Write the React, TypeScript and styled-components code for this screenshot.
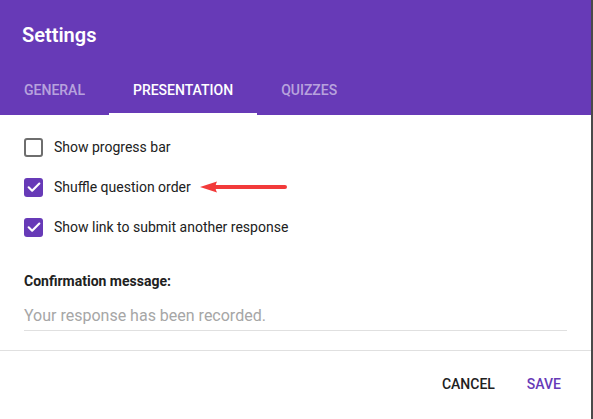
import * as React from 'react';
import styled, { createGlobalStyle } from 'styled-components';

const PURPLE = '#673ab7';

interface TabProps {
  active?: boolean;
}

interface CheckProps {
  checked?: boolean;
}

interface ButtonProps {
  primary?: boolean;
}

const tabs = ['General', 'Presentation', 'Quizzes'];

const options = [
  { label: 'Show progress bar', checked: false, marked: false },
  { label: 'Shuffle question order', checked: true, marked: true },
  { label: 'Show link to submit another response', checked: true, marked: false },
];

const CheckMark = () => (
  <svg width="16" height="16" viewBox="0 0 24 24">
    <path d="M4 12.5l5.2 5L20 6.8" fill="none" stroke="#fff" strokeWidth="3.2" strokeLinecap="round" strokeLinejoin="round" />
  </svg>
);

const RedArrow = () => (
  <svg width="88" height="12" viewBox="0 0 88 12">
    <path d="M0 6 L17 0.5 Q14 6 17 11.5 Z" fill="#f23a3a" />
    <line x1="15" y1="6" x2="85" y2="6" stroke="#f23a3a" strokeWidth="4" strokeLinecap="round" />
  </svg>
);

const App: React.FC = () => {
  return (
    <>
      <GlobalStyle />
      <Dialog>
        <Header>
          <Title>Settings</Title>
          <TabBar>
            {tabs.map(tab => (
              <Tab key={tab} active={tab === 'Presentation'}>{tab}</Tab>
            ))}
          </TabBar>
        </Header>

        <Body>
          {options.map(option => (
            <Row key={option.label}>
              <Box checked={option.checked}>{option.checked ? <CheckMark /> : null}</Box>
              <Label>{option.label}</Label>
              {option.marked ? <Pointer><RedArrow /></Pointer> : null}
            </Row>
          ))}

          <FieldLabel>Confirmation message:</FieldLabel>
          <Field>Your response has been recorded.</Field>
        </Body>

        <Footer>
          <Button>Cancel</Button>
          <Button primary>Save</Button>
        </Footer>
      </Dialog>
    </>
  );
};

export default App;

const GlobalStyle = createGlobalStyle`
  html, body {
    margin: 0;
    padding: 0;
    background: #ffffff;
  }

  body {
    font-family: Roboto, "Liberation Sans", Arial, sans-serif;
    -webkit-font-smoothing: antialiased;
  }
`;

const Dialog = styled.div`
  width: 593px;
  height: 419px;
  box-sizing: border-box;
  border-right: 2px solid #4a4a4a;
  background: #ffffff;
  display: flex;
  flex-direction: column;
  overflow: hidden;
`;

const Header = styled.header`
  background: ${PURPLE};
  height: 115px;
  padding-top: 23px;
  box-sizing: border-box;
`;

const Title = styled.h1`
  margin: 0 0 20px;
  padding-left: 22px;
  font-size: 20px;
  line-height: 24px;
  font-weight: 600;
  color: #ffffff;
`;

const TabBar = styled.nav`
  display: flex;
`;

const Tab = styled.div<TabProps>`
  height: 48px;
  box-sizing: border-box;
  padding: 0 24px;
  display: flex;
  align-items: center;
  font-size: 14px;
  line-height: 16px;
  font-weight: 500;
  text-transform: uppercase;
  color: ${(props: TabProps) => props.active ? '#ffffff' : 'rgba(255, 255, 255, 0.55)'};
  border-bottom: 2px solid ${(props: TabProps) => props.active ? '#ffffff' : 'transparent'};
`;

const Body = styled.section`
  padding: 12px 24px 19px;
  display: flex;
  flex-direction: column;
`;

const Row = styled.div`
  height: 40px;
  display: flex;
  align-items: center;
`;

const Box = styled.span<CheckProps>`
  width: 19px;
  height: 19px;
  box-sizing: border-box;
  border-radius: 3px;
  margin-right: 11px;
  display: flex;
  align-items: center;
  justify-content: center;
  background: ${(props: CheckProps) => props.checked ? PURPLE : 'transparent'};
  border: ${(props: CheckProps) => props.checked ? 'none' : '2px solid #6e6e6e'};
`;

const Label = styled.span`
  font-size: 14px;
  line-height: 20px;
  color: #212121;
`;

const Pointer = styled.span`
  display: flex;
  margin-left: 9px;
`;

const FieldLabel = styled.div`
  margin-top: 24px;
  font-size: 14px;
  line-height: 20px;
  font-weight: 700;
  color: #212121;
`;

const Field = styled.div`
  margin-top: 13px;
  padding-bottom: 2px;
  border-bottom: 1px solid #e0e0e0;
  font-size: 16px;
  line-height: 24px;
  color: #a6a6a6;
`;

const Footer = styled.footer`
  border-top: 1px solid #e0e0e0;
  padding: 15px 14px 0;
  display: flex;
  justify-content: flex-end;
`;

const Button = styled.button<ButtonProps>`
  font: inherit;
  font-size: 14px;
  font-weight: 500;
  text-transform: uppercase;
  height: 36px;
  padding: 0 16px;
  border: none;
  background: transparent;
  color: ${(props: ButtonProps) => props.primary ? PURPLE : '#212121'};
`;
